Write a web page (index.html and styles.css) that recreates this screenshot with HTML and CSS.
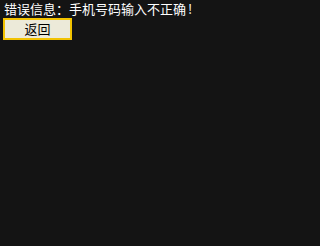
FILE: index.html
```html
<!DOCTYPE html>
<html lang="zh-CN">
<head>
<meta charset="utf-8">
<link rel="stylesheet" href="styles.css">
</head>
<body>
<div class="page">
  <p class="msg">错误信息：手机号码输入不正确<span class="bang">!</span></p>
  <button class="back" type="button">返回</button>
</div>
</body>
</html>
```
FILE: styles.css
```css
html, body {
  margin: 0;
  padding: 0;
  background: #141414;
  height: 100%;
}
.page {
  display: flex;
  flex-direction: column;
  align-items: flex-start;
  padding: 1px 0 0 3px;
  font-family: "Noto Sans CJK SC", "Noto Sans", sans-serif;
}
.msg {
  margin: 0 0 0 1px;
  color: #ffffff;
  font-size: 13px;
  line-height: 16px;
  white-space: nowrap;
}
.bang {
  margin-left: 2px;
}
.back {
  margin-top: 1px;
  width: 69px;
  height: 22px;
  padding: 0;
  box-sizing: border-box;
  border: 2px solid #f2c200;
  background: #ecead9;
  color: #000000;
  font-family: "Noto Sans CJK SC", sans-serif;
  font-size: 13px;
  line-height: 16px;
  text-align: center;
}
```
